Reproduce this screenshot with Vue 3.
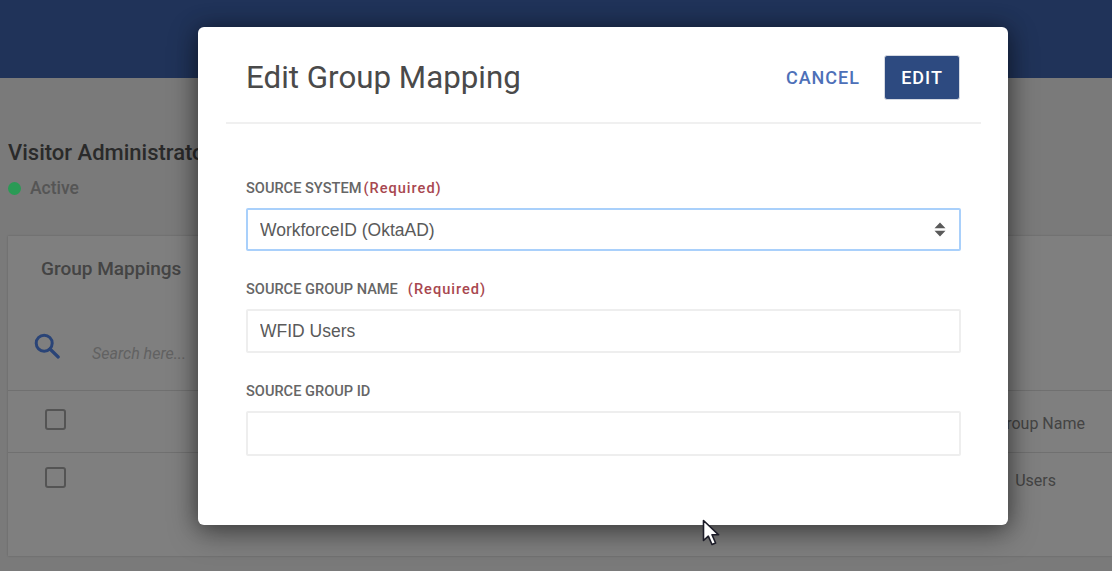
<script setup>
const fields = [
  { label: 'SOURCE GROUP NAME', required: true, value: 'WFID Users' },
  { label: 'SOURCE GROUP ID', required: false, value: '' }
]
</script>

<template>
  <div class="page">
    <header class="topbar"></header>
    <section class="summary">
      <h1 class="name">Visitor Administrator</h1>
      <div class="status"><span class="dot"></span>Active</div>
    </section>
    <section class="card">
      <h2 class="card-title">Group Mappings</h2>
      <div class="search">
        <svg class="search-icon" width="26" height="26" viewBox="0 0 26 26" fill="none" aria-hidden="true">
          <circle cx="10.2" cy="10.2" r="8" stroke="#5488ee" stroke-width="3" />
          <path d="M16 16l8.2 8" stroke="#5488ee" stroke-width="3.2" stroke-linecap="round" />
        </svg>
        <span class="placeholder">Search here...</span>
      </div>
      <div class="row head">
        <span class="check"></span>
        <span class="cell head-cell">Source Group Name</span>
      </div>
      <div class="row body">
        <span class="check"></span>
        <span class="cell body-cell">WFID Users</span>
      </div>
    </section>

    <div class="overlay"></div>

    <div class="modal">
      <div class="modal-head">
        <h2 class="modal-title">Edit Group Mapping</h2>
        <div class="actions">
          <button class="cancel" type="button">CANCEL</button>
          <button class="edit" type="button">EDIT</button>
        </div>
      </div>
      <form class="form" @submit.prevent>
        <div class="field">
          <label class="label">SOURCE SYSTEM<span class="req tight">(Required)</span></label>
          <div class="select-wrap">
            <select class="control focus">
              <option>WorkforceID (OktaAD)</option>
            </select>
            <svg class="arrows" width="12" height="15" viewBox="0 0 12 15" aria-hidden="true">
              <path d="M6 0.5L11.5 6.2H0.5Z M6 14.5L0.5 8.8H11.5Z" fill="#5a5a5a" />
            </svg>
          </div>
        </div>
        <div v-for="f in fields" :key="f.label" class="field">
          <label class="label">{{ f.label }}<span v-if="f.required" class="req">(Required)</span></label>
          <input class="control" :class="{ tall: !f.required }" :value="f.value" />
        </div>
      </form>
    </div>

    <svg class="cursor" width="20" height="28" viewBox="0 0 20 28" aria-hidden="true">
      <path d="M1.5 1.5V21.5L6.3 17.2L10 25.5L13.6 24L10 15.8H16.6Z" fill="#fff" stroke="#1c1c28" stroke-width="1.6" stroke-linejoin="round" />
    </svg>
  </div>
</template>

<style scoped>
.page {
  position: relative;
  width: 1112px;
  height: 571px;
  overflow: hidden;
  background: #f4f4f4;
  font-family: Roboto, "Liberation Sans", sans-serif;
}
.topbar {
  height: 78px;
  background: #4066b2;
}
.summary {
  padding: 61px 0 0 8px;
  height: 158px;
  box-sizing: border-box;
}
.name {
  margin: 0;
  font-size: 22px;
  line-height: 28px;
  font-weight: 500;
  color: #555;
  white-space: nowrap;
}
.status {
  display: flex;
  align-items: center;
  gap: 10px;
  margin-top: 9px;
  font-size: 17.5px;
  line-height: 24px;
  font-weight: 500;
  color: #aaa;
}
.dot {
  position: relative;
  z-index: 2;
  width: 13px;
  height: 13px;
  margin-right: -1px;
  border-radius: 50%;
  background: #2a9a55;
}
.card {
  margin-left: 8px;
  height: 320px;
  background: #fff;
  box-shadow: 0 0 2px rgba(0, 0, 0, 0.2);
}
.card-title {
  margin: 0;
  padding: 21px 0 0 33px;
  height: 76px;
  box-sizing: border-box;
  font-size: 19px;
  line-height: 24px;
  font-weight: 500;
  color: #888;
}
.search {
  display: flex;
  align-items: center;
  height: 79px;
  padding: 0 0 0 26px;
  gap: 32px;
  box-sizing: border-box;
  border-bottom: 1px solid #e0e0e0;
}
.search-icon {
  margin-top: -10px;
}
.placeholder {
  margin-top: 4px;
  font-size: 16px;
  font-style: italic;
  color: #c4c4c4;
}
.row {
  position: relative;
  display: flex;
  justify-content: space-between;
  padding-left: 37px;
  box-sizing: border-box;
}
.row.head {
  height: 62px;
  padding-top: 18px;
  border-bottom: 1px solid #e0e0e0;
}
.row.body {
  padding-top: 14px;
}
.check {
  width: 21px;
  height: 21px;
  box-sizing: border-box;
  border: 2px solid #a8a8a8;
  border-radius: 3px;
}
.cell {
  font-size: 16px;
  line-height: 24px;
  color: #888;
  white-space: nowrap;
}
.head-cell {
  margin: 3px 27px 0 0;
}
.body-cell {
  margin: 2px 56px 0 0;
  word-spacing: 5px;
}
.overlay {
  position: absolute;
  z-index: 1;
  inset: 0;
  background: rgba(0, 0, 0, 0.5);
}
.modal {
  position: absolute;
  z-index: 3;
  left: 198px;
  top: 27px;
  width: 810px;
  height: 498px;
  box-sizing: border-box;
  padding: 0 27px 0 28px;
  background: #fff;
  border-radius: 6px;
  box-shadow: 0 8px 30px rgba(0, 0, 0, 0.4), 0 0 20px rgba(0, 0, 0, 0.3);
}
.modal-head {
  display: flex;
  align-items: center;
  justify-content: space-between;
  box-sizing: border-box;
  height: 97px;
  padding: 6px 21px 0 20px;
  border-bottom: 2px solid #f0f0f0;
}
.modal-title {
  margin: 0;
  font-size: 31.3px;
  font-weight: 400;
  color: #4a4a4a;
  white-space: nowrap;
}
.actions {
  display: flex;
  align-items: center;
  gap: 24px;
}
.cancel,
.edit {
  font-family: inherit;
  font-size: 18px;
  font-weight: 500;
  letter-spacing: 1px;
  cursor: pointer;
}
.cancel {
  padding: 0;
  border: 0;
  background: none;
  color: #4d70b8;
}
.edit {
  width: 76px;
  height: 45px;
  padding: 0;
  color: #fff;
  background: #2d4a80;
  border: 1px solid #d5d9e2;
  border-radius: 3px;
}
.form {
  padding: 54px 20px 0;
}
.field {
  margin-bottom: 28px;
}
.label {
  display: block;
  font-size: 14.6px;
  line-height: 21px;
  margin-bottom: 12px;
  height: 18px;
  font-weight: 500;
  color: #666;
}
.req {
  margin-left: 10px;
  letter-spacing: 1px;
  font-weight: 500;
  color: #a8474f;
}
.req.tight {
  margin-left: 2px;
}
.select-wrap {
  position: relative;
}
.control {
  display: block;
  width: 715px;
  height: 44px;
  box-sizing: border-box;
  padding: 0 12px;
  font-family: "Liberation Sans", Arial, sans-serif;
  font-size: 17.5px;
  color: #5a5a5a;
  background: #fff;
  border: 2px solid #eee;
  border-radius: 2px;
  outline: none;
  appearance: none;
}
.control.focus {
  height: 43px;
  border-color: #a9d0fb;
}
.control.tall {
  height: 45px;
}
.arrows {
  position: absolute;
  right: 15px;
  top: 14px;
}
.cursor {
  position: absolute;
  z-index: 4;
  left: 702px;
  top: 519px;
}
</style>
